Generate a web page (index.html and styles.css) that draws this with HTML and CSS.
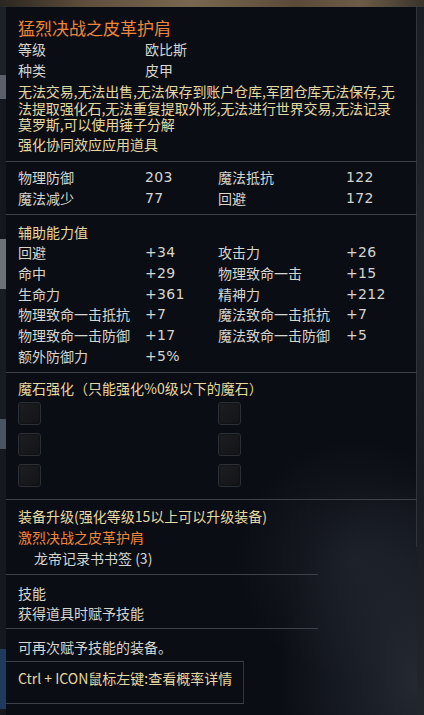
FILE: index.html
```html
<!DOCTYPE html>
<html lang="zh">
<head>
<meta charset="utf-8">
<title>猛烈决战之皮革护肩</title>
<link rel="stylesheet" href="styles.css">
</head>
<body>
<div class="scene">
  <div class="top-strip"></div>
  <div class="middle">
    <div class="left-strip">
      <div class="ls a"></div>
      <div class="ls b"></div>
      <div class="ls c"></div>
      <div class="ls d"></div>
      <div class="ls e"></div>
      <div class="ls f"></div>
      <div class="ls g"></div>
      <div class="ls h"></div>
    </div>
    <div class="tooltip">
      <section class="sec s1">
        <div class="title">猛烈决战之皮革护肩</div>
        <div class="kv"><span class="k">等级</span><span>欧比斯</span></div>
        <div class="kv"><span class="k">种类</span><span>皮甲</span></div>
        <div class="desc">无法交易,无法出售,无法保存到账户仓库,军团仓库无法保存,无<br>法提取强化石,无法重复提取外形,无法进行世界交易,无法记录<br>莫罗斯,可以使用锤子分解</div>
        <div class="note">强化协同效应应用道具</div>
      </section>
      <div class="sep"></div>
      <section class="sec s2 grid">
        <span>物理防御</span><span class="num">203</span><span>魔法抵抗</span><span class="num">122</span>
        <span>魔法减少</span><span class="num">77</span><span>回避</span><span class="num">172</span>
      </section>
      <div class="sep"></div>
      <section class="sec s3 grid">
        <span class="head">辅助能力值</span>
        <span>回避</span><span class="num">+34</span><span>攻击力</span><span class="num">+26</span>
        <span>命中</span><span class="num">+29</span><span>物理致命一击</span><span class="num">+15</span>
        <span>生命力</span><span class="num">+361</span><span>精神力</span><span class="num">+212</span>
        <span>物理致命一击抵抗</span><span class="num">+7</span><span>魔法致命一击抵抗</span><span class="num">+7</span>
        <span>物理致命一击防御</span><span class="num">+17</span><span>魔法致命一击防御</span><span class="num">+5</span>
        <span>额外防御力</span><span class="num">+5%</span>
      </section>
      <div class="sep"></div>
      <section class="sec s4">
        <div class="yel">魔石强化（只能强化%0级以下的魔石）</div>
        <div class="sockets">
          <div class="slot"></div><div class="slot"></div>
          <div class="slot"></div><div class="slot"></div>
          <div class="slot"></div><div class="slot"></div>
        </div>
      </section>
      <div class="sep"></div>
      <section class="sec s5">
        <div class="yel">装备升级(强化等级15以上可以升级装备)</div>
        <div class="orange">激烈决战之皮革护肩</div>
        <div class="mat">龙帝记录书书签 (3)</div>
      </section>
      <div class="sep short"></div>
      <section class="sec s6">
        <div>技能</div>
        <div>获得道具时赋予技能</div>
      </section>
      <div class="sep short"></div>
      <section class="sec s7">
        <div>可再次赋予技能的装备。</div>
      </section>
      <div class="sep shorter"></div>
      <section class="sec s8">
        <div class="yel">Ctrl + ICON鼠标左键:查看概率详情</div>
      </section>
      <div class="sep shorter"></div>
    </div>
    <div class="right-strip"></div>
  </div>
</div>
</body>
</html>
```

FILE: styles.css
```css
* { box-sizing: border-box; }
html, body { margin: 0; padding: 0; }
body {
  width: 424px;
  height: 715px;
  overflow: hidden;
  background: #0c0f15;
  font-family: "Noto Sans CJK SC", "Noto Sans", sans-serif;
  font-size: 14px;
  color: #d6d6cf;
}
.scene { display: flex; flex-direction: column; height: 715px; }
.top-strip {
  height: 7px;
  flex: none;
  background: linear-gradient(90deg, #2a2620 0%, #5e4e3c 20%, #7a6750 45%, #5a4a38 70%, #6d5c47 85%, #3a342c 100%);
}
.middle { display: flex; flex: 1; min-height: 0; }
.left-strip {
  width: 6px;
  flex: none;
  display: flex;
  flex-direction: column;
  background: #14181e;
}
.ls { flex: none; }
.ls.a { height: 68px; background: #1c2027; }
.ls.b { height: 24px; background: #59606a; }
.ls.c { height: 140px; background: #14181e; }
.ls.d { height: 50px; background: #6c7178; }
.ls.e { height: 130px; background: #171b22; }
.ls.f { height: 30px; background: #4a5360; }
.ls.g { height: 200px; background: #15191f; }
.ls.h { height: 60px; background: #1f3a5c; }
.right-strip {
  width: 7px;
  flex: none;
  background: linear-gradient(180deg, #1b1e24 0%, #23262c 40%, #1a1d23 70%, #22262d 100%);
}
.tooltip {
  width: 411px;
  flex: none;
  background:
    linear-gradient(#30353d, #30353d) right top / 1px 540px no-repeat,
    radial-gradient(ellipse 140px 200px at 100% 95%, rgba(44, 50, 60, 0.75), rgba(44, 50, 60, 0) 100%),
    radial-gradient(ellipse 120px 120px at 85% 78%, rgba(36, 41, 50, 0.6), rgba(36, 41, 50, 0) 100%),
    #0a0d14;
}
.sec { padding-left: 12px; }
.sep { height: 1px; background: #3d424a; }
.sep.short { width: 312px; }
.sep.shorter { width: 238px; }

.s1 { padding-top: 10px; padding-bottom: 6px; }
.title { font-size: 17px; line-height: 22px; color: #f0863c; }
.kv { display: flex; line-height: 21px; }
.kv .k { width: 127px; }
.desc { margin-top: 2px; line-height: 16.5px; color: #e6d8a2; white-space: nowrap; letter-spacing: -0.1px; }
.note { margin-top: 1px; line-height: 21px; color: #e6d8a2; }

.grid {
  display: grid;
  grid-template-columns: 127px 73px 128px 1fr;
}
.s2 { padding-top: 5px; padding-bottom: 5px; line-height: 21px; }
.s3 { padding-top: 7px; padding-bottom: 6px; line-height: 20.7px; }
.head { grid-column: 1 / -1; color: #e6d8a2; }
.num { font-family: "DejaVu Sans", "Noto Sans", sans-serif; font-size: 14px; letter-spacing: 0.3px; }

.yel { color: #e6d8a2; }
.orange { color: #f0863c; }

.s4 { padding-top: 5px; padding-bottom: 12px; line-height: 21px; }
.sockets {
  margin-top: 3px;
  display: grid;
  grid-template-columns: 200px 23px;
  grid-auto-rows: 23px;
  row-gap: 8px;
}
.slot {
  width: 23px;
  height: 23px;
  border: 1px solid #2c2f35;
  border-radius: 3px;
  background: linear-gradient(135deg, #1c1e22, #121418);
  box-shadow: inset 0 0 2px rgba(0, 0, 0, 0.8);
}

.s5 { padding-top: 6px; padding-bottom: 5px; line-height: 21px; }
.mat { padding-left: 16px; }
.s6 { padding-top: 8px; padding-bottom: 5px; line-height: 20px; }
.s7 { padding-top: 8px; padding-bottom: 3px; line-height: 21px; }
.s8 {
  width: 238px;
  padding-top: 6px;
  padding-bottom: 14px;
  line-height: 21px;
  border-right: 1px solid #30353d;
}
```
